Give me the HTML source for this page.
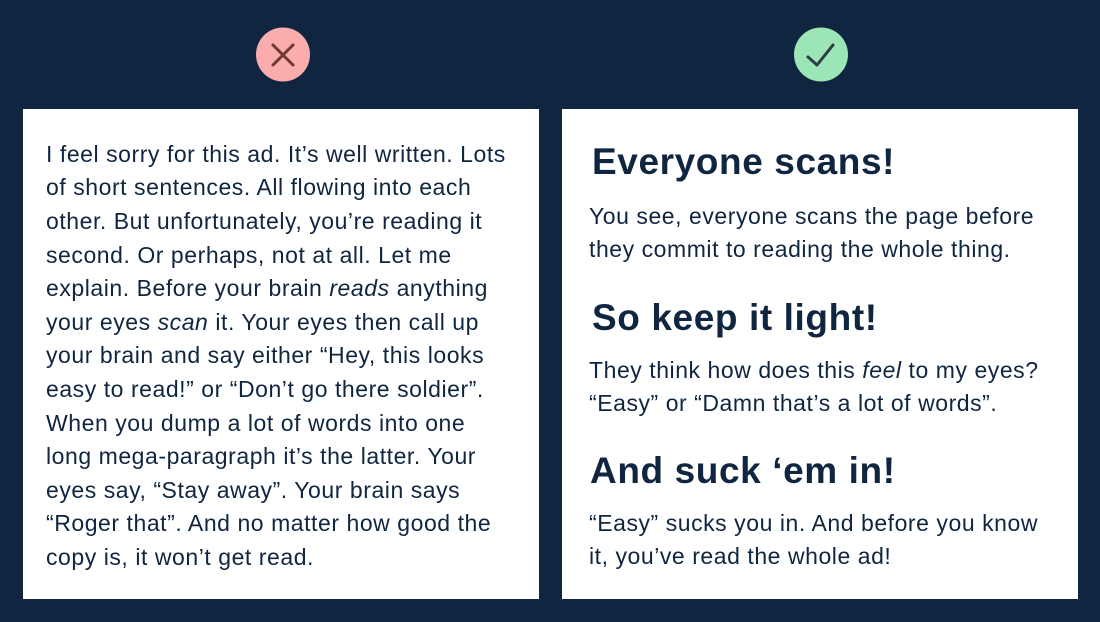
<!DOCTYPE html>
<html><head><meta charset="utf-8"><style>
body{margin:0;width:1100px;height:622px;background:#0f2540;position:relative;overflow:hidden;font-family:"Liberation Sans",sans-serif;color:#0f2540}
.card{position:absolute;top:109px;width:516px;height:490px;background:#fff}
.l{position:absolute;white-space:nowrap;font-size:23px;letter-spacing:0.55px;line-height:30px}
.h{position:absolute;white-space:nowrap;font-size:37px;font-weight:bold;line-height:44px;letter-spacing:0.6px}
</style></head><body>
<svg style="position:absolute;left:0;top:0" width="1100" height="110">
<circle cx="283" cy="54.5" r="27" fill="#fbacac"/>
<path d="M273 45 L293 65 M293 45 L273 65" stroke="#6e3b2c" stroke-width="3" stroke-linecap="round"/>
<circle cx="821" cy="54.5" r="27" fill="#9ce5b6"/>
<path d="M808 57 L817 65 L833 45" stroke="#2f3b44" stroke-width="3" fill="none" stroke-linecap="round" stroke-linejoin="round"/>
</svg>
<div class="card" style="left:23px"></div>
<div class="card" style="left:562px"></div>
<div class="l" style="left:46px;top:139px">I feel sorry for this ad. It’s well written. Lots</div>
<div class="l" style="left:46px;top:172px">of short sentences. All flowing into each</div>
<div class="l" style="left:46px;top:206px">other. But unfortunately, you’re reading it</div>
<div class="l" style="left:46px;top:240px">second. Or perhaps, not at all. Let me</div>
<div class="l" style="left:46px;top:273px">explain. Before your brain <i>reads</i> anything</div>
<div class="l" style="left:46px;top:307px">your eyes <i>scan</i> it. Your eyes then call up</div>
<div class="l" style="left:46px;top:340px">your brain and say either “Hey, this looks</div>
<div class="l" style="left:46px;top:374px">easy to read!” or “Don’t go there soldier”.</div>
<div class="l" style="left:46px;top:408px">When you dump a lot of words into one</div>
<div class="l" style="left:46px;top:441px">long mega-paragraph it’s the latter. Your</div>
<div class="l" style="left:46px;top:475px">eyes say, “Stay away”. Your brain says</div>
<div class="l" style="left:46px;top:508px">“Roger that”. And no matter how good the</div>
<div class="l" style="left:46px;top:542px">copy is, it won’t get read.</div>
<div class="h" style="left:592px;top:140px">Everyone scans!</div>
<div class="l" style="left:589px;top:201px">You see, everyone scans the page before</div>
<div class="l" style="left:589px;top:234px">they commit to reading the whole thing.</div>
<div class="h" style="left:592px;top:296px">So keep it light!</div>
<div class="l" style="left:589px;top:355px">They think how does this <i>feel</i> to my eyes?</div>
<div class="l" style="left:589px;top:388px">“Easy” or “Damn that’s a lot of words”.</div>
<div class="h" style="left:590px;top:449px">And suck ‘em in!</div>
<div class="l" style="left:589px;top:508px">“Easy” sucks you in. And before you know</div>
<div class="l" style="left:589px;top:541px">it, you’ve read the whole ad!</div>
</body></html>
